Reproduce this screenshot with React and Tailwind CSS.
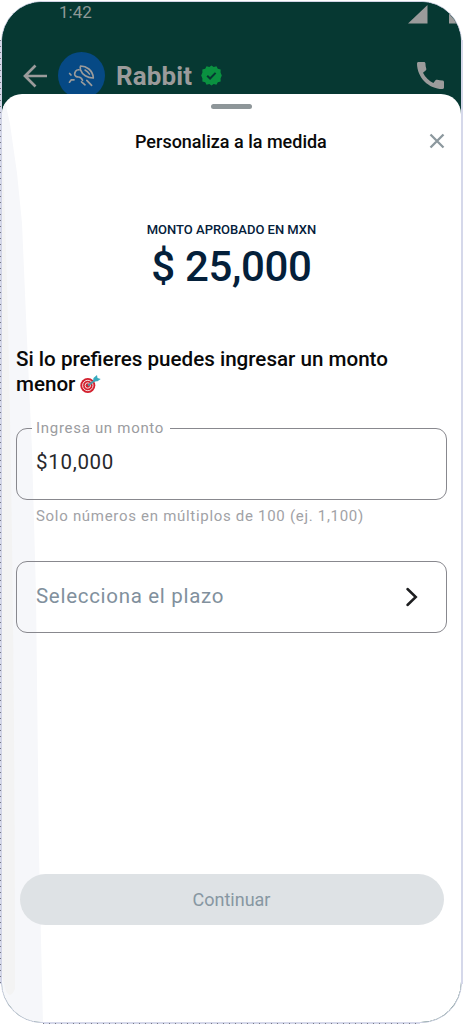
import React from "react";

function RabbitLogo() {
  return (
    <svg className="h-[26px] w-[28px]" viewBox="0 0 28 26" fill="none" stroke="#9b9b9b" strokeWidth="1.700" strokeLinecap="round" strokeLinejoin="round">
      <path d="M12.600 3C18 3 25 7 25.300 15C19.500 15.200 14 11.500 12.600 7C12.100 5 12 3.800 12.600 3Z" />
      <path d="M17 7C19 8 20.500 9.500 21.500 11.200" strokeWidth="1.500" />
      <path d="M11 6.800C8 6.500 6.300 9 6.800 12C7.500 13.800 9 14 10.500 14C13 14 13.800 15.500 14.500 17.200" />
      <path d="M1.500 19.200L3.300 16.800H6" />
      <path d="M18.800 17.300L23.600 22.300M13.500 18.800L17 21.800" />
      <path d="M1.600 10.500L3 12" />
    </svg>
  );
}

function Verified() {
  return (
    <svg className="ml-[9px] h-[21px] w-[21px]" viewBox="0 0 22 22">
      <path d="M11 .5l2.300 1.700 2.900-.8 1.400 2.600 3 .7-.1 3.100 1.300 3.200-1.300 3.200.1 3.100-3 .7-1.400 2.600-2.900-.8-2.300 1.700-2.300-1.700-2.900.8-1.400-2.600-3-.7.1-3.100L.2 11l1.300-3.200-.1-3.100 3-.7 1.400-2.600 2.900.8z" fill="#0a9140" />
      <path d="M6.500 11.200l3 3 5.800-6" fill="none" stroke="#063832" strokeWidth="2.100" />
    </svg>
  );
}

function Target() {
  return (
    <svg className="ml-[5px] inline-block h-[20px] w-[21px] align-[-4px]" viewBox="0 0 21 20">
      <circle cx="7.800" cy="10.500" r="7.500" fill="#d3202e" />
      <circle cx="7.800" cy="10.500" r="5.200" fill="none" stroke="#f5e3e3" strokeWidth="1" />
      <circle cx="7.800" cy="10.500" r="2.700" fill="none" stroke="#f5e3e3" strokeWidth="1" />
      <path d="M8 10.500L15.500 5" stroke="#4b9aa8" strokeWidth="1.800" />
      <path d="M13 6.500l.5-3.500L17 0l.5 3 3.200.9-3.200 2.400z" fill="#38aabd" />
    </svg>
  );
}

function Header() {
  return (
    <header className="h-[110px] bg-[#063832]">
      <div className="flex h-[23px] items-start justify-between pl-[57px]">
        <span className="text-[17px] leading-[21px] text-[#8f9996]">1:42</span>
        <svg className="h-[23px] w-[53px]" viewBox="0 0 53 23" fill="#9b9b9b">
          <path d="M0 21.500L19.500 3v18.500zM41 10h12v11.500H41z" />
        </svg>
      </div>
      <div className="mt-[27px] flex h-[47px] items-center pl-[21px] pr-[17px]">
        <svg className="h-[24px] w-[25px]" viewBox="0 0 25 24" fill="none" stroke="#9b9b9b" strokeWidth="2.700">
          <path d="M12.500 1.500L2 12l10.500 10.500M2 12h22" />
        </svg>
        <div className="ml-[10px] flex h-[47px] w-[47px] items-center justify-center rounded-full bg-[#064985]">
          <RabbitLogo />
        </div>
        <span className="ml-[11px] text-[26px] font-bold leading-8 tracking-[0.100px] text-[#9b9b9b]">Rabbit</span>
        <Verified />
        <svg className="ml-auto h-[27px] w-[27px]" viewBox="3 3 18 18" fill="#9b9b9b">
          <path d="M20.010 15.380c-1.230 0-2.420-.2-3.530-.56-.35-.12-.74-.03-1.010.24l-1.570 1.970c-2.830-1.350-5.480-3.900-6.890-6.830l1.950-1.660c.27-.28.35-.67.24-1.020-.37-1.110-.56-2.300-.56-3.530 0-.54-.45-.99-.99-.99H4.190C3.650 3 3 3.240 3 3.990 3 13.280 10.730 21 20.010 21c.71 0 .99-.63.99-1.180v-3.450c0-.54-.45-.99-.99-.99z" />
        </svg>
      </div>
    </header>
  );
}

export default function App() {
  return (
    <div className="relative h-[1024px] w-[463px] overflow-hidden bg-white p-px" style={{ fontFamily: 'Roboto, "Liberation Sans", sans-serif' }}>
      <div className="h-[1022px] overflow-hidden rounded-[41px] border border-[#d0d3e5] bg-[#063832]">
        <Header />
        <main className="relative -mt-[18px] flex h-[930px] flex-col overflow-hidden rounded-t-[20px] bg-white">
          <svg className="absolute left-0 top-0 h-[930px] w-[45px]" viewBox="0 0 45 930">
            <path d="M0 5L3 7L8 30L15 79L20 129L25 246L30 356L34 500L37 760L41 930H0Z" fill="#f6f7fa" />
            <path d="M0 45C9 250 13 600 13 895Q5 912 0 880Z" fill="#f3f3f3" />
          </svg>
          <div className="relative flex flex-1 flex-col">
            <div className="mx-auto mt-[10px] h-[5px] w-[41px] rounded-full bg-[#8e9699]" />
            <div className="mt-[19px] flex h-[26px] items-center pr-[16px]">
              <h1 className="flex-1 whitespace-nowrap pl-[133px] text-[18px] font-medium text-[#090909]">Personaliza a la medida</h1>
              <svg className="h-[16px] w-[16px]" viewBox="0 0 16 16" fill="none" stroke="#8c989e" strokeWidth="2.300">
                <path d="M1.500 1.500l13 13M14.500 1.500l-13 13" />
              </svg>
            </div>
            <div className="mt-[66px] flex flex-col items-center text-[#04203a]">
              <span className="text-[13px] font-medium leading-5">MONTO APROBADO EN MXN</span>
              <span className="mt-[2px] text-[42px] font-medium leading-[50px] tracking-[-0.350px]">$ 25,000</span>
            </div>
            <h2 className="mt-[55px] pl-[14px] text-[20.600px] font-medium leading-[25px] text-[#090909]">
              Si lo prefieres puedes ingresar un monto<br />menor<Target />
            </h2>
            <fieldset className="mx-[14px] mt-[22px] h-[81px] rounded-[11px] border-[1.500px] border-[#88888e] pl-[19px]">
              <legend className="-ml-[4px] pl-[4px] pr-[6px] text-[15px] leading-[18px] tracking-[0.700px] text-[#9b9ca0]">Ingresa un monto</legend>
              <span className="mt-[11px] block text-[20.500px] leading-[28px] tracking-[0.700px] text-[#27282c]">$10,000</span>
            </fieldset>
            <p className="mt-[7px] pl-[34px] text-[15px] leading-[18px] tracking-[0.700px] text-[#a1a2a6]">Solo números en múltiplos de 100 (ej. 1,100)</p>
            <button className="mx-[14px] mt-[36px] flex h-[72px] items-center justify-between rounded-[11px] border border-[#88888e] pb-[3px] pl-[19px] pr-[28px]">
              <span className="text-[20.500px] leading-7 tracking-[0.700px] text-[#81909d]">Selecciona el plazo</span>
              <svg className="mt-[3px] h-[20px] w-[13px]" viewBox="0 0 13 20" fill="none" stroke="#1d1e20" strokeWidth="2.500" strokeLinecap="round">
                <path d="M2.500 2l8.300 8-8.300 8" />
              </svg>
            </button>
            <button className="mx-[17.500px] mb-[99px] mt-auto flex h-[51px] items-center justify-center rounded-full bg-[#dee2e5] text-[18px] text-[#8797a2]">Continuar</button>
          </div>
        </main>
      </div>
      <svg className="absolute inset-0 h-[1024px] w-[463px]" fill="none">
        <path d="M.5 40V984" stroke="#d5d8ea" />
        <path d="M.5 40V984" stroke="#777986" strokeDasharray="1 5" />
        <path d="M462 40V984" stroke="#d5d8ea" strokeWidth="2" />
        <path d="M43 1023H420" stroke="#d5d8ea" strokeWidth="2" />
        <path d="M43 1023.500H420" stroke="#777986" strokeDasharray="1 5" />
      </svg>
    </div>
  );
}
